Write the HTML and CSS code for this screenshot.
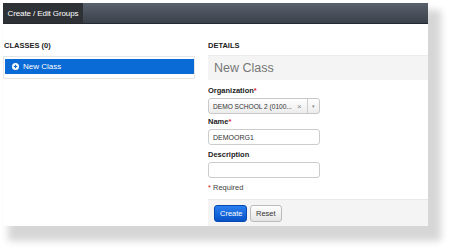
FILE: index.html
```html
<!DOCTYPE html>
<html lang="en">
<head>
    <meta charset="UTF-8">
    <title>Create / Edit Groups</title>
    <link rel="stylesheet" href="styles.css">
</head>
<body>
    <div class="window">
        <div class="topbar">
            <div class="tab">Create / Edit Groups</div>
        </div>
        <div class="content">
            <div class="classes">
                <h2>CLASSES (0)</h2>
                <div class="list">
                    <div class="item selected">
                        <svg class="plus" width="7" height="7" viewBox="0 0 8 8">
                            <circle cx="4" cy="4" r="4" fill="#fff"/>
                            <path d="M4 2v4M2 4h4" stroke="#0a6ad6" stroke-width="1.4"/>
                        </svg>
                        New Class
                    </div>
                </div>
            </div>
            <div class="details">
                <h2>DETAILS</h2>
                <div class="details-head">New Class</div>
                <div class="form">
                    <label>Organization<span class="req">*</span></label>
                    <div class="select">
                        <span class="select-text">DEMO SCHOOL 2 (0100...</span>
                        <span class="clear">&times;</span>
                        <span class="arrow">&#9662;</span>
                    </div>
                    <label>Name<span class="req">*</span></label>
                    <input type="text" value="DEMOORG1">
                    <label>Description</label>
                    <input type="text">
                    <div class="required"><span class="req">*</span> Required</div>
                </div>
                <div class="actions">
                    <button class="btn primary">Create</button>
                    <button class="btn">Reset</button>
                </div>
            </div>
        </div>
    </div>
</body>
</html>
```

FILE: styles.css
```css
/* base */
body {
    margin: 0;
    min-height: 250px;
    background: #fff;
    font-family: "Liberation Sans", Arial, sans-serif;
}

.window {
    margin: 3px 0 0 3px;
    width: 425px;
    height: 223px;
    background: #fff;
    box-shadow: 9px 11px 7px 4px rgba(0, 0, 0, 0.16);
    display: flex;
    flex-direction: column;
    overflow: hidden;
}

.topbar {
    height: 21px;
    flex-shrink: 0;
    background: linear-gradient(#59616d, #3b414a);
    border-bottom: 1px solid #262a30;
    box-sizing: border-box;
    display: flex;
}

.tab {
    width: 80px;
    background: #2e3136;
    color: #fff;
    font-size: 8px;
    line-height: 21px;
    text-align: center;
    letter-spacing: -0.1px;
}

.content {
    flex: 1;
    display: flex;
    min-height: 0;
}

h2 {
    font-size: 7.5px;
    font-weight: bold;
    color: #222;
    margin: 17px 0 6px 1px;
}

.classes {
    width: 192px;
}

.list {
    border: 1px solid #e6e6e6;
    padding: 2px 0 4px 1px;
}

.item {
    height: 15px;
    display: flex;
    align-items: center;
    gap: 4px;
    padding-left: 7px;
    font-size: 8px;
    color: #fff;
}

.selected {
    background: #0a6ad6;
}

.details {
    margin-left: 13px;
    flex: 1;
    display: flex;
    flex-direction: column;
}

.details h2 {
    margin-left: 0;
    margin-bottom: 5px;
}

.details-head {
    height: 25px;
    background: #f4f4f4;
    border-top: 1px solid #ececec;
    box-sizing: border-box;
    padding-left: 6px;
    line-height: 24px;
    font-size: 12.5px;
    color: #777;
}

.form {
    flex: 1;
    padding-top: 6px;
    display: flex;
    flex-direction: column;
    align-items: flex-start;
}

label {
    font-size: 7.5px;
    font-weight: bold;
    color: #222;
    margin-bottom: 3px;
}

.req {
    color: #d22;
}

.select {
    width: 112px;
    height: 16px;
    box-sizing: border-box;
    border: 1px solid #c8c8c8;
    border-radius: 3px;
    background: linear-gradient(#fff, #ececec);
    display: flex;
    align-items: center;
    font-size: 6.6px;
    color: #333;
    margin-bottom: 3px;
}

.select-text {
    padding-left: 4px;
    white-space: nowrap;
}

.clear {
    flex: 1;
    color: #888;
    font-size: 8px;
    padding-left: 5px;
}

.arrow {
    width: 11px;
    height: 100%;
    border-left: 1px solid #ccc;
    color: #888;
    font-size: 5px;
    display: flex;
    align-items: center;
    justify-content: center;
}

input {
    width: 112px;
    height: 16px;
    box-sizing: border-box;
    border: 1px solid #ccc;
    border-radius: 3px;
    padding: 0 4px;
    font-family: inherit;
    font-size: 7px;
    color: #333;
    margin: 0 0 5px 0;
}

.required {
    font-size: 7.5px;
    color: #444;
}

.actions {
    height: 27px;
    flex-shrink: 0;
    background: #f4f4f4;
    border-top: 1px solid #e8e8e8;
    box-sizing: border-box;
    display: flex;
    align-items: center;
    gap: 3px;
    padding-left: 6px;
}

.btn {
    height: 17px;
    padding: 0 5px;
    border: 1px solid #bbb;
    border-radius: 3px;
    background: linear-gradient(#fff, #e4e4e4);
    font-family: inherit;
    font-size: 7.5px;
    color: #333;
}

.btn.primary {
    background: linear-gradient(#2a7ff0, #0652c8);
    border-color: #0647b0;
    color: #fff;
    width: 33px;
}
```
